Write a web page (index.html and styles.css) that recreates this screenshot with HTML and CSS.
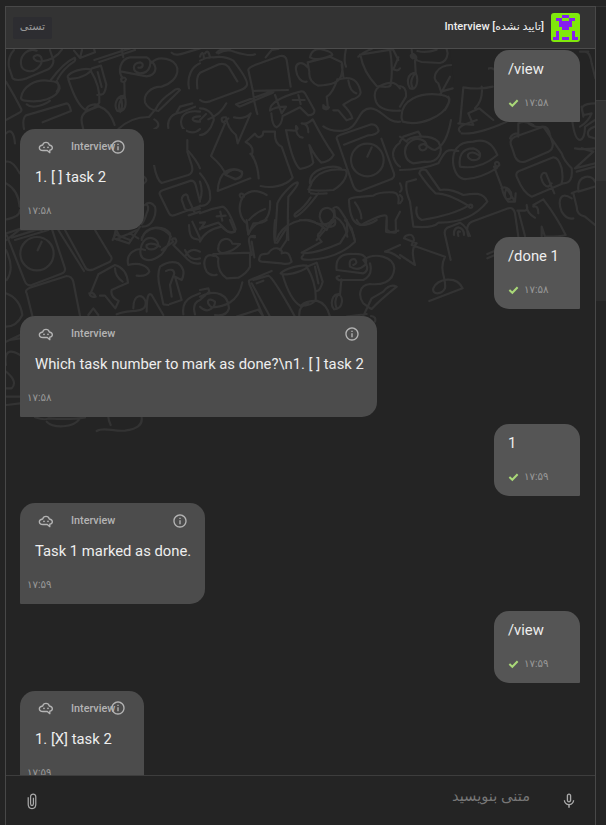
FILE: index.html
```html
<!DOCTYPE html>
<html lang="fa">
<head>
<meta charset="utf-8">
<title>Interview</title>
<link rel="stylesheet" href="styles.css">
</head>
<body>
<svg width="0" height="0" class="defs">
  <symbol id="bot" viewBox="0 0 24 24"><path d="M7 9Q8 5 12 5Q16 5 17 9Q21.500 10 21.500 13Q21.500 16 17.700 16.800V20.500L14 17.300H7.500Q2 16.800 2 13Q2 10 7 9Z" fill="none" stroke="currentColor" stroke-width="2" stroke-linejoin="round"/><circle cx="9" cy="12.500" r="1.300" fill="currentColor"/><circle cx="15" cy="12.500" r="1.300" fill="currentColor"/></symbol>
  <symbol id="info" viewBox="0 0 24 24"><path fill="currentColor" d="M11 7h2v2h-2zm0 4h2v6h-2zm1-9C6.480 2 2 6.480 2 12s4.480 10 10 10 10-4.480 10-10S17.520 2 12 2zm0 18c-4.410 0-8-3.590-8-8s3.590-8 8-8 8 3.590 8 8-3.590 8-8 8z"/></symbol>
  <symbol id="check" viewBox="0 0 12 10"><path d="M1.500 5L4.700 8L10.500 2" fill="none" stroke="currentColor" stroke-width="2.200"/></symbol>
</svg>
<div class="app">
  <header class="header">
    <div class="peer">
      <svg class="avatar" viewBox="0 0 29 29" shape-rendering="crispEdges"><path fill="#80e80c" d="M0 0h29v29H0z"/><path fill="#8520f0" d="M11 2h7v3h-7zM5 5h6v3h7V5h6v3h-3v6h-3v3h-7v-3H8V8H5zM5 18h3v9H2v-3h3zM21 18h3v6h3v3h-6zM11 24h7v3h-7z"/></svg>
      <span class="title" dir="rtl">[تایید نشده] Interview</span>
    </div>
    <span class="tag">تستی</span>
  </header>
  <main class="chat">
    <svg class="doodles" viewBox="6 49 589 390">
      <g transform="scale(.33333)">
        <path d="M42 150Q20 175 28 205L38 235Q50 245 80 235L145 208Q162 195 160 180L150 150M110 152C85 142 60 165 63 192C65 215 95 220 112 205C135 185 125 163 108 166C92 170 105 187 125 184C150 181 172 170 186 148M222 152L240 174L285 157L282 146M240 174L246 150M283 180L390 145M298 186L405 150M365 148L370 172M515 158C525 168 538 164 560 157L600 145"/>
        <path d="M63 293C68 260 105 235 150 243Q180 245 179 265C172 295 120 310 75 302Q62 300 63 293M151 242Q190 188 224 173Q228 180 223 184Q190 205 173 237M170 243Q182 260 170 275M80 313C95 328 135 315 150 302"/>
        <path d="M203 229C210 215 250 202 272 208C280 214 245 235 217 236Q202 238 203 229M205 238C222 290 238 320 257 330Q280 330 298 308Q302 260 272 212M276 205L303 197Q312 230 319 254Q315 285 303 284L292 285M293 216L305 261M257 330C265 310 295 310 297 319Q268 330 255 337C238 352 246 370 250 388M297 319Q330 330 344 375M355 387Q395 350 447 351L468 326"/>
        <path d="M368 234C352 215 360 177 390 172H440C460 180 452 220 420 220C395 215 396 190 420 187C433 190 430 205 415 203M361 214L440 229C470 225 473 200 455 185M455 188C475 165 525 175 532 205C535 235 508 253 485 260C450 260 430 285 435 307Q445 330 475 333Q500 310 540 270Q532 262 518 275Q480 300 468 326M363 238Q374 227 378 238Q375 250 364 244V235M373 248L374 288C350 285 340 315 352 333C378 338 380 310 374 288Q352 305 358 331M360 290Q372 315 361 336"/>
        <path d="M18 245Q45 290 64 328Q66 335 55 340L18 360M72 387Q66 355 78 346L200 310Q208 310 213 333L128 367M18 400Q40 380 45 430M18 485Q38 480 59 520M463 358Q475 365 475 375Q475 382 463 387M505 384C500 355 520 340 540 338L585 320M530 337L540 320L577 310M600 335C565 330 545 340 543 365C543 395 580 407 600 387M600 365C570 365 571 350 600 349M562 420V450Q590 480 600 505M600 190C575 200 560 230 567 265M599 220Q588 230 592 265"/>
        <path d="M462 495Q470 540 485 549L565 525Q582 518 575 495L562 455M432 530Q446 541 432 550M433 615C445 610 448 625 440 640Q432 665 425 672M427 680C460 680 470 640 465 620Q450 600 435 615M480 585Q475 575 490 570L573 542Q583 542 587 555L600 605M480 585L507 640Q512 650 525 645L600 618M545 600Q546 585 558 583Q564 585 565 597L585 640M546 602L555 627Q565 635 600 625M566 646L600 635M577 665L600 715M18 550Q55 570 59 620M20 658Q60 650 60 630M338 720L350 692L360 712L385 702L410 690M350 718L390 700L415 715M20 720L60 688L125 690M45 720L145 690M425 720Q430 695 460 685Q490 680 513 710"/>
      </g>
      <g transform="translate(200 40) scale(.33333)">
        <path d="M0 50C5 35 10 35 12 55M15 40Q25 25 30 53M0 62Q20 50 40 52C55 50 80 50 100 62Q145 120 141 135Q137 145 120 151L30 184Q10 190 0 180M0 98L45 78Q70 65 85 80L112 124M50 38Q60 25 90 27M55 40Q80 25 105 36Q150 50 165 43M197 52L215 30L235 27M165 75L240 48Q256 45 260 60L272 140M145 90Q145 83 165 75M145 90L158 150Q162 190 172 222M158 153L264 150M108 193L217 153Q225 155 215 160L118 200ZM225 165L245 220L258 200Q225 200 210 212Q208 180 300 155Q310 152 315 160L343 210Q345 225 325 226L300 202L248 228Q245 255 230 262Q217 260 214 220M278 180L314 180M295 165L302 192"/>
        <path d="M330 51C335 30 350 27 360 27Q398 35 397 45Q350 65 330 52M323 67L390 50L425 67Q430 80 425 102C420 130 390 135 355 137Q325 125 328 95L323 67M323 82C305 60 285 70 288 90C290 110 305 130 320 125M438 80Q430 65 438 26M425 74L430 110M480 44L578 28M475 50Q490 36 515 27M482 48Q490 95 530 138Q575 145 572 133Q580 90 570 28M595 52L580 88Q595 95 600 85M580 30L595 60M575 128Q510 135 528 185Q540 215 600 212M575 128Q590 130 600 145M412 118L440 114Q475 115 482 158Q480 172 455 179L430 194Q455 220 457 235L440 241L415 211H400M412 118Q398 160 380 170L384 205M445 122Q450 155 469 160M370 195Q375 205 387 202Q382 212 370 205ZM370 259Q390 275 430 272C480 265 470 205 512 205C545 205 560 250 600 245"/>
        <path d="M0 205C25 205 50 230 38 248C32 270 15 285 0 285M25 238Q60 225 79 190M0 240L18 222M78 232Q60 230 67 245L75 250L33 348Q70 380 77 405L107 417Q130 410 126 395Q105 380 78 394Q55 410 53 453L151 415M76 404Q100 378 125 396Q130 415 105 418ZM78 233Q83 265 108 285L113 310L152 220Q135 240 102 232M85 235L70 247M137 306L165 281Q175 300 188 285L190 275H225Q222 310 245 320L278 413C255 440 210 445 182 438M137 306Q165 320 155 345Q173 370 176 415M151 341L160 350M258 270L282 272Q300 270 288 258Q287 290 308 293M258 270Q278 370 300 387Q335 380 340 368L328 315Q345 350 364 368Q390 365 401 345Q370 300 338 238Q320 255 305 250Q325 250 325 277"/>
        <path d="M412 300Q405 290 420 285L510 254Q530 250 536 272Q530 285 505 286L432 314M412 300L457 430Q465 456 482 453L575 417Q585 410 582 400L544 296M515 322L502 350M600 308Q575 325 580 350Q585 370 600 380"/><circle cx="502" cy="360" r="49"/>
        <path d="M325 448Q340 455 400 450C435 430 445 400 437 390C400 385 345 390 330 440M330 430C325 385 405 370 423 386M328 456Q325 440 333 435M333 460L350 462L380 460M355 460Q310 520 286 530Q280 525 288 519Q315 500 332 472M0 400Q35 440 30 480Q20 500 0 497M0 425Q10 455 0 480M0 520Q35 505 68 500Q85 505 107 568Q105 580 82 574L55 548L0 566M50 529L77 527M61 515L67 542M0 548L15 547L0 568M122 472C112 460 132 455 132 470M130 468Q160 440 200 465M130 468C110 500 120 535 140 550L145 583Q160 550 195 540Q213 520 210 483M147 540Q170 515 195 507M152 590L165 592M225 600L232 490C240 470 275 430 292 427Q300 430 265 470Q262 550 265 600M230 600C245 550 315 525 350 550C380 560 405 545 402 520C390 495 360 500 359 530Q365 562 393 560M350 600Q380 560 405 542M400 505Q410 495 420 510Q455 560 465 600M403 510L405 530Q435 545 442 590M447 482Q445 475 465 472L520 467Q535 455 580 457Q600 460 595 490M447 482Q450 555 485 554Q560 515 560 530V568Q570 580 588 577L587 540L600 515M465 487Q485 515 484 535"/>
      </g>
      <g transform="translate(400 0) scale(.33333)">
        <path d="M35 150Q35 180 65 186L120 189Q140 185 143 160L140 148M52 153Q80 160 110 149M38 175Q25 165 40 162Q55 170 45 182L47 218C20 220 20 250 30 265C50 275 57 240 47 218Q25 245 39 265M155 195C110 195 90 235 115 250L123 275L158 265M150 230L120 285M5 355C0 300 60 275 125 285Q155 290 145 310C130 350 60 380 8 365ZM145 290Q155 300 135 330M262 207Q275 200 285 210M180 370L190 262Q240 270 278 260M175 370L220 375L205 340L238 325L280 360M245 260Q250 300 225 325M555 155Q570 155 575 190L586 235M540 155L565 155M0 258Q20 260 18 290L0 320M545 320L550 350M586 310Q530 310 552 345L575 340Q565 365 540 380"/>
      </g>
      <g transform="translate(0 225) scale(.33333)">
        <path d="M18 25L95 0L155 10L195 130Q197 142 182 147L95 180Q80 185 73 165L18 25M35 38L130 8M125 50L113 76M18 75Q45 130 20 165M18 205Q60 220 67 270Q50 305 18 305"/><circle cx="111" cy="86" r="50"/>
        <path d="M80 205Q73 195 90 188L200 153Q215 153 220 170L240 272M80 205L97 272M175 15L252 138M195 15L255 125Q260 140 278 134L330 110Q340 100 330 90L285 15M347 15L342 40L387 55L420 5M350 30L390 45M272 205L295 148L345 120Q380 130 384 173Q355 185 335 195Q330 215 356 228L346 250L315 212H300M345 130Q345 155 368 170M268 205Q280 200 287 215Q270 218 268 205M425 40C440 0 490 0 510 25Q515 50 485 88C445 120 410 105 425 60C440 25 475 40 475 60C465 80 435 75 440 60Q455 50 480 65M385 120C375 85 410 65 435 75M385 120C420 110 445 125 448 140Q440 155 410 152M485 75L520 50Q510 40 525 40Q535 50 520 60L555 95Q570 65 600 80M555 95Q575 120 600 115M555 75Q570 110 600 100M480 190Q470 150 480 125Q510 105 535 115Q560 135 545 165L525 155L545 225L510 237M480 190L490 238L505 240M498 138Q520 128 523 145L510 180L515 215M400 250C400 205 430 205 437 230C440 270 390 250 350 268M440 260Q440 195 455 210L490 270M265 270L280 250L295 270M550 268Q545 230 575 215L600 205M585 268Q575 235 600 225M18 350L60 330M30 345L60 340M18 420Q10 360 60 390M18 440Q55 470 35 490L18 490M20 515L60 515M20 540L60 535M105 577Q135 587 145 580Q215 585 255 577M140 590C160 610 220 610 240 580M290 618C310 605 340 620 375 617Q430 610 425 577M325 577Q325 585 332 600M567 0Q568 35 580 40L600 45"/>
      </g>
      <g transform="translate(200 220) scale(.33333)">
        <path d="M0 65Q15 30 65 20Q90 45 105 35L90 0M140 0L145 43L160 10Q190 10 200 0M55 87C55 50 90 50 97 71L120 72Q100 95 70 99Q55 100 54 85M40 102L150 98L150 140Q140 160 115 173L80 175Q50 155 55 115L45 105M42 108C10 95 8 135 20 155Q35 170 50 164M165 48Q142 45 148 70L155 105M155 65L163 112M178 115C180 95 200 105 205 100C220 75 250 85 245 100C270 90 270 115 275 125Q265 135 245 130L185 125Q175 123 178 115M225 0Q220 45 225 68L232 68L262 20M265 0L260 60L240 90M300 0Q350 0 380 30L395 0M405 0Q410 20 390 20M305 98Q340 105 420 70L442 35L440 0M305 98L365 65Q345 45 360 38L370 20M310 105C295 120 315 120 335 119C385 115 430 100 465 65L455 25L435 0M470 0L480 15Q510 15 530 0M560 0L558 35Q570 40 595 32M555 95L600 75M555 95Q575 95 600 115"/>
        <path d="M242 160C255 145 305 133 320 137C330 150 255 170 242 160M248 165Q270 240 302 258Q335 258 347 240Q350 190 320 140M320 140L350 128L368 185Q360 215 348 213M345 140L355 190M302 258Q315 243 350 242Q380 250 390 290M325 250Q295 255 298 290M148 190Q143 180 155 178L215 153M160 180L205 167Q218 170 285 290M148 192L190 290M155 190L210 290M170 190L190 182M0 210L25 205L28 215L0 240M0 230C50 205 85 225 87 265Q80 290 45 285M0 260C25 285 45 260 45 245C25 230 15 245 35 262C70 260 115 250 127 187M110 290L175 269L190 290M410 150C405 115 425 100 460 102C495 100 505 115 495 135Q475 155 450 140Q445 115 465 118Q475 130 460 135M410 150L490 160C510 150 500 130 490 120C525 95 580 110 583 145C580 190 540 195 510 192C475 195 475 230 490 250Q510 265 515 267Q540 240 590 200Q570 190 550 215L515 235L490 288M418 168C400 170 415 185 430 180H490Q520 165 510 130M424 178L420 225C395 215 390 255 402 268C430 268 432 230 415 222Q400 240 410 265M440 290L500 282M513 288Q530 290 525 305"/>
      </g>
      <g transform="translate(400 120) scale(.33333)">
        <path d="M0 50L20 65C20 50 90 40 115 65C135 100 110 130 75 125L40 130C10 120 10 85 25 70C50 45 80 60 80 80C80 95 55 95 58 78C75 60 85 90 105 90Q140 75 153 0M0 65L10 50L55 35L63 48M0 150Q65 150 115 130C135 95 135 85 175 93M180 35Q170 25 190 15L230 0M185 40Q230 45 320 5M160 135C155 95 170 65 220 65Q270 50 292 105Q240 150 180 140C175 110 185 85 220 85C250 95 245 125 215 120C190 110 210 85 235 105M160 135Q170 180 200 177Q240 175 290 145M290 140C275 125 298 120 298 135Q290 145 282 140L305 200Q310 230 325 245L345 245L347 220M305 205C320 195 340 215 332 235C315 245 310 225 320 205L345 245M48 178L20 186Q15 210 30 245L40 320Q100 325 115 308Q210 310 262 245C250 215 220 220 190 225Q150 205 120 210L78 150Q60 145 58 160Q85 200 107 220Q145 220 205 257Q160 285 65 300Q45 290 50 262"/><circle cx="212" cy="259" r="5"/>
        <path d="M335 80Q325 60 345 50L430 20Q445 20 450 45L458 70Q460 88 445 95L375 125Q355 130 345 110ZM355 50L355 10Q375 0 400 15M330 55Q335 40 355 40M380 5Q400 25 430 20L485 100Q490 120 515 145Q520 190 490 190L395 230Q370 220 350 170Q345 155 365 150L460 112Q475 110 485 145Q490 175 485 188M423 172Q425 155 438 160L463 220M423 172Q430 200 445 200L455 190M517 5Q525 60 540 60Q555 55 555 20L585 0M585 20Q555 30 567 50L585 55M585 85Q550 90 525 85M545 85L580 95L525 145L585 130M530 155L585 140M535 210C530 165 575 160 585 185M515 220Q535 210 535 215L585 200M520 220L530 260Q530 285 555 290L585 315M515 235C475 210 475 250 485 275Q500 300 520 295M205 348Q195 315 215 305L325 265Q340 260 345 280L355 350M352 272L375 272Q385 270 380 255Q380 280 405 293M355 272L375 348M400 260Q415 255 415 280M430 238L400 255M430 238Q470 290 497 345Q480 350 440 350M425 320L435 350M425 320V350M152 420L135 345Q130 325 150 320L180 308Q200 320 210 348M162 345Q160 325 175 322Q192 325 192 345M175 348Q170 330 180 335M262 402L285 392M262 415L285 405"/>
        <path d="M12 355C15 345 40 335 42 360L35 375L135 410C115 450 140 475 135 505C125 525 95 525 100 505C110 475 170 465 188 505L88 543M12 355L50 370Q30 385 45 435L0 405M0 225Q15 235 0 250M0 190Q10 210 0 215"/>
      </g>
      <path d="M151 129H186V165H151ZM450 49H488V84H454Z" fill="#242424" stroke="none"/>
    </svg>
    <div class="messages">
      <article class="msg mine"><p>/view</p><footer><svg class="tick"><use href="#check"/></svg><time>۱۷:۵۸</time></footer></article>
      <article class="msg bot short"><header><svg class="face"><use href="#bot"/></svg><b>Interview</b><svg class="info"><use href="#info"/></svg></header><p>1. [ ] task 2</p><time>۱۷:۵۸</time></article>
      <article class="msg mine"><p>/done 1</p><footer><svg class="tick"><use href="#check"/></svg><time>۱۷:۵۸</time></footer></article>
      <article class="msg bot wide"><header><svg class="face"><use href="#bot"/></svg><b>Interview</b><svg class="info"><use href="#info"/></svg></header><p>Which task number to mark as done?\n1. [ ] task 2</p><time>۱۷:۵۸</time></article>
      <article class="msg mine"><p>1</p><footer><svg class="tick"><use href="#check"/></svg><time>۱۷:۵۹</time></footer></article>
      <article class="msg bot medium"><header><svg class="face"><use href="#bot"/></svg><b>Interview</b><svg class="info"><use href="#info"/></svg></header><p>Task 1 marked as done.</p><time>۱۷:۵۹</time></article>
      <article class="msg mine"><p>/view</p><footer><svg class="tick"><use href="#check"/></svg><time>۱۷:۵۹</time></footer></article>
      <article class="msg bot short"><header><svg class="face"><use href="#bot"/></svg><b>Interview</b><svg class="info"><use href="#info"/></svg></header><p>1. [X] task 2</p><time>۱۷:۵۹</time></article>
    </div>
  </main>
  <div class="composer">
    <svg class="clip" viewBox="0 0 12 18"><path d="M2 4.500V12C2 18 10 18 10 12V4C10 .2 4.500 .2 4.500 4V11.500C4.500 14 7.500 14 7.500 11.500V5" fill="none" stroke="currentColor" stroke-width="1.300"/></svg>
    <span class="placeholder" dir="rtl">متنی بنویسید</span>
    <svg class="mic" viewBox="0 0 24 24"><path fill="currentColor" d="M12 14c1.660 0 3-1.340 3-3V5c0-1.660-1.340-3-3-3S9 3.340 9 5v6c0 1.660 1.340 3 3 3zm-1.200-9.100c0-.66.54-1.200 1.200-1.200s1.200.54 1.200 1.200l-.01 6.200c0 .66-.53 1.200-1.190 1.200s-1.200-.54-1.200-1.200zm6.500 6.100c0 3-2.540 5.100-5.300 5.100S6.700 14 6.700 11H5c0 3.410 2.720 6.230 6 6.720V21h2v-3.280c3.280-.48 6-3.300 6-6.720z"/></svg>
  </div>
</div>
<aside class="side"><div class="side-top"></div><div class="side-gap"></div><div class="side-light"></div><div class="side-mid"></div></aside>
</body>
</html>
```
FILE: styles.css
```css
* { box-sizing: border-box; }
body { margin: 0; width: 606px; height: 825px; overflow: hidden; display: flex; background: #242424; color: #eee; font-family: Roboto, "Noto Sans", "DejaVu Sans", sans-serif; }
.defs { position: absolute; }
.app { width: 591px; height: 819px; margin: 6px 0 0 5px; border: 1px solid #484848; border-bottom: 0; display: flex; flex-direction: column; }
.header { height: 42px; flex: none; background: #333; border-bottom: 1px solid #4c4c4c; display: flex; flex-direction: row-reverse; align-items: center; justify-content: space-between; padding: 0 15px 0 7px; }
.peer { display: flex; flex-direction: row-reverse; align-items: center; gap: 7px; }
.avatar { width: 29px; height: 29px; border-radius: 3px; }
.title { font-size: 11px; font-weight: 500; white-space: nowrap; position: relative; top: -1px; }
.tag { width: 39px; height: 22px; background: #2d2d31; border-radius: 2px; color: #999; font-size: 11px; line-height: 19px; text-align: center; }
.chat { flex: 1; min-height: 0; overflow: hidden; position: relative; }
.doodles { position: absolute; left: 0; top: 0; width: 589px; height: 390px; fill: none; stroke: #333; stroke-width: 6.600; stroke-linecap: round; stroke-linejoin: round; }
.messages { position: relative; display: flex; flex-direction: column; align-items: flex-start; padding: 1px 15px 0 14px; gap: 7.080px; }
.msg { flex: none; border-radius: 15px 15px 15px 1px; background: #4c4c4c; }
.msg p { margin: 0; font-size: 14.800px; line-height: 20px; white-space: nowrap; }
.msg time { display: block; font-size: 10.300px; line-height: 14px; color: #999; }
.mine { align-self: flex-end; width: 86px; height: 72px; padding: 9px 14px 0; background: #555; border-radius: 15px 15px 1px 15px; }
.mine footer { display: flex; align-items: center; gap: 5px; margin-top: 17px; }
.tick { width: 11px; height: 10px; color: #a9d878; }
.bot { height: 101px; padding: 9px 14px 0 15px; }
.short { width: 124px; }
.medium { width: 185px; }
.wide { width: 357px; }
.bot header { display: flex; align-items: center; height: 17px; color: #b4b4b4; }
.face { width: 16px; height: 16px; flex: none; margin-left: 3px; }
.bot b { font-size: 10.800px; font-weight: 500; margin-left: 17px; }
.info { width: 16px; height: 16px; flex: none; margin: 0 3px 0 auto; }
.short .info { margin: 0 0 0 -5px; }
.bot p { margin-top: 12px; }
.bot time { margin: 17px 0 0 -8px; }
.composer { height: 50px; flex: none; border-top: 1px solid #3d3d3d; display: flex; align-items: center; padding: 1px 17px 0 20px; color: #aaa; }
.clip { width: 12px; height: 17px; }
.placeholder { margin-left: auto; margin-right: 30px; color: #777; font-size: 14.700px; position: relative; top: -5px; }
.mic { width: 18px; height: 18px; }
.side { width: 10px; display: flex; flex-direction: column; }
.side-top { height: 7px; border-bottom: 1px solid #333; }
.side-gap { height: 93px; }
.side-light { height: 81px; background: #333; border-top: 1px solid #3c3c3c; }
.side-mid { height: 120px; background: #2c2c2c; }
```
